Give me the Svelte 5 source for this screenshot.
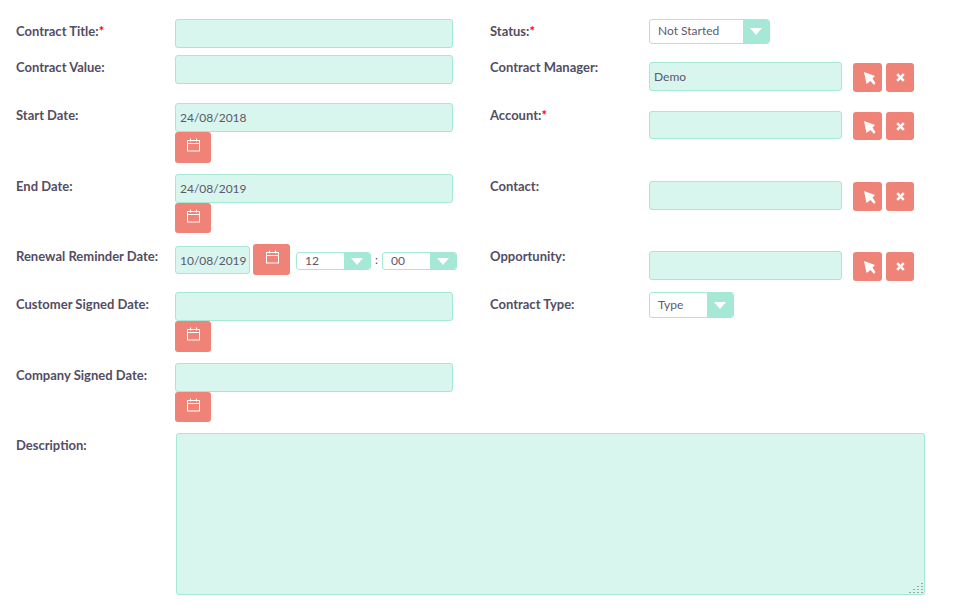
<script lang="ts">
    // dots of the textarea resize grip, bottom row first
    const gripDots = [
        [1, 10], [5, 10], [9, 10], [13, 10],
        [5, 7], [9, 7], [13, 7],
        [9, 4], [13, 4],
        [13, 1],
    ];
</script>

{#snippet calendar()}
    <svg width="14" height="14" viewBox="0 0 14 14" fill="none" stroke="currentColor" stroke-width="1" aria-hidden="true">
        <rect x="1.5" y="2.5" width="12" height="10.5" />
        <path d="M1.5 5.5h12M4.5 .5v3M10.5 .5v3" />
    </svg>
{/snippet}

{#snippet dateField(value: string)}
    <div class="date-field">
        <input class="text" type="text" {value} />
        <button class="cal" type="button" aria-label="Pick date">{@render calendar()}</button>
    </div>
{/snippet}

{#snippet relate(value: string)}
    <div class="relate">
        <input class="text" type="text" {value} />
        <button class="square first" type="button" aria-label="Select">
            <svg class="pointer" width="12" height="13" viewBox="0 0 12 13" aria-hidden="true">
                <path d="M0 0l11 4-2.5 2.5 3 4.5-1.5 2-3.5-4-4 3z" fill="#fff" />
            </svg>
        </button>
        <button class="square" type="button" aria-label="Clear">
            <svg width="9" height="9" viewBox="0 0 9 9" aria-hidden="true">
                <path d="M1.2 1.2l6.6 6.6M7.8 1.2L1.2 7.8" stroke="#fff" stroke-width="2.5" fill="none" />
            </svg>
        </button>
    </div>
{/snippet}

{#snippet dropdown(value: string, cls: string)}
    <div class="dropdown {cls}">
        <span class="value">{value}</span>
        <span class="arrow"><i></i></span>
    </div>
{/snippet}

<form class="edit-form">
    <div class="row r1">
        <div class="label">Contract Title:<span class="req">*</span></div>
        <div class="field"><input class="text" type="text" /></div>
        <div class="label">Status:<span class="req">*</span></div>
        <div class="field">{@render dropdown("Not Started", "status")}</div>
    </div>
    <div class="row r2">
        <div class="label">Contract Value:</div>
        <div class="field"><input class="text" type="text" /></div>
        <div class="label">Contract Manager:</div>
        <div class="field">{@render relate("Demo")}</div>
    </div>
    <div class="row r3">
        <div class="label">Start Date:</div>
        <div class="field">{@render dateField("24/08/2018")}</div>
        <div class="label">Account:<span class="req">*</span></div>
        <div class="field">{@render relate("")}</div>
    </div>
    <div class="row r4">
        <div class="label">End Date:</div>
        <div class="field">{@render dateField("24/08/2019")}</div>
        <div class="label">Contact:</div>
        <div class="field">{@render relate("")}</div>
    </div>
    <div class="row r5">
        <div class="label">Renewal Reminder Date:</div>
        <div class="field reminder">
            <input class="text short" type="text" value="10/08/2019" />
            <button class="cal wide" type="button" aria-label="Pick date">{@render calendar()}</button>
            <div class="time-first">{@render dropdown("12", "time")}</div>
            <span class="colon">:</span>
            {@render dropdown("00", "time")}
        </div>
        <div class="label">Opportunity:</div>
        <div class="field">{@render relate("")}</div>
    </div>
    <div class="row r6">
        <div class="label">Customer Signed Date:</div>
        <div class="field">{@render dateField("")}</div>
        <div class="label">Contract Type:</div>
        <div class="field">{@render dropdown("Type", "type")}</div>
    </div>
    <div class="row r7">
        <div class="label">Company Signed Date:</div>
        <div class="field">{@render dateField("")}</div>
    </div>
    <div class="row desc">
        <div class="label">Description:</div>
        <div class="area-wrap">
            <textarea></textarea>
            <svg class="grip" width="16" height="12" viewBox="0 0 16 12" aria-hidden="true">
                {#each gripDots as [x, y]}
                    <rect {x} {y} width="2" height="1" fill="#9aa9a6" />
                {/each}
            </svg>
        </div>
    </div>
</form>

<style>
    :global(body) {
        background: #fff;
        font-family: Lato, sans-serif;
        color: #534d64;
    }

    .edit-form {
        width: 961px;
        height: 614px;
        padding: 19px 0 0 16px;
        box-sizing: border-box;
    }

    .row {
        display: grid;
        grid-template-columns: 159px 315px 159px 1fr;
    }

    .r1 { height: 36px; }
    .r2 { height: 48px; }
    .r3 { height: 71px; }
    .r4 { height: 70px; }
    .r5 { height: 48px; }
    .r6 { height: 71px; }
    .r7 { height: 70px; }

    .label {
        padding-top: 5px;
        font-size: 13px;
        line-height: 15px;
        font-weight: 700;
        color: #534d64;
    }

    .req {
        color: #ff0000;
    }

    .text {
        display: block;
        width: 278px;
        height: 29px;
        padding: 0 4px;
        box-sizing: border-box;
        border: 1px solid #a5e8d6;
        border-radius: 3px;
        background: #d8f5ee;
        font: 12px Lato, sans-serif;
        color: #5d586d;
        outline: none;
    }

    .cal {
        display: flex;
        align-items: flex-start;
        justify-content: center;
        width: 36px;
        height: 31px;
        padding: 6px 0 0;
        border: 0;
        border-radius: 3px;
        background: #f08377;
        color: #fff;
    }

    .r4 .cal,
    .r7 .cal {
        height: 30px;
    }

    .reminder {
        display: flex;
        align-items: flex-start;
    }

    .text.short {
        width: 75px;
        height: 28px;
        margin-top: 2px;
        padding-right: 0;
    }

    .cal.wide {
        width: 37px;
        margin-left: 3px;
    }

    .time-first {
        margin-left: 6px;
    }

    .colon {
        width: 11px;
        margin-top: 9px;
        text-align: center;
        font-size: 12px;
        line-height: 14px;
    }

    .dropdown {
        display: flex;
        box-sizing: border-box;
        border: 1px solid #a5e8d6;
        border-radius: 3px;
        background: #fff;
        font-size: 12px;
        color: #5d586d;
        overflow: hidden;
    }

    .value {
        flex: 1;
        padding-left: 8px;
        white-space: nowrap;
    }

    .arrow {
        display: flex;
        align-items: center;
        justify-content: center;
        background: #a5e8d6;
    }

    .arrow i {
        width: 0;
        height: 0;
        border-left: 6px solid transparent;
        border-right: 6px solid transparent;
        border-top: 7px solid #fff;
    }

    .status {
        width: 121px;
        height: 25px;
        line-height: 21px;
    }

    .status .arrow {
        width: 26px;
    }

    .type {
        width: 85px;
        height: 26px;
        line-height: 24px;
    }

    .type .arrow {
        width: 26px;
    }

    .time {
        width: 75px;
        height: 18px;
        margin-top: 8px;
        line-height: 16px;
        font-size: 12px;
    }

    .time .arrow {
        width: 26px;
    }

    .relate {
        display: flex;
        align-items: flex-start;
        padding-top: 7px;
    }

    .r3 .relate {
        padding-top: 8px;
    }

    .relate .text {
        width: 193px;
    }

    .r3 .relate .text {
        height: 28px;
    }

    .square {
        display: flex;
        align-items: center;
        justify-content: center;
        width: 28px;
        height: 29px;
        margin: 1px 0 0 4px;
        padding: 0;
        border: 0;
        border-radius: 3px;
        background: #f08377;
    }

    .r3 .square {
        height: 28px;
    }

    .square.first {
        width: 29px;
        margin-left: 11px;
    }

    .pointer {
        margin: 2px 0 0 4px;
    }

    .desc {
        grid-template-columns: 160px 749px;
    }

    .area-wrap {
        position: relative;
        height: 162px;
    }

    textarea {
        display: block;
        width: 100%;
        height: 100%;
        box-sizing: border-box;
        border: 1px solid #a5e8d6;
        border-radius: 3px;
        background: #d8f5ee;
        resize: none;
        outline: none;
    }

    .grip {
        position: absolute;
        right: 1px;
        bottom: 1px;
    }
</style>
